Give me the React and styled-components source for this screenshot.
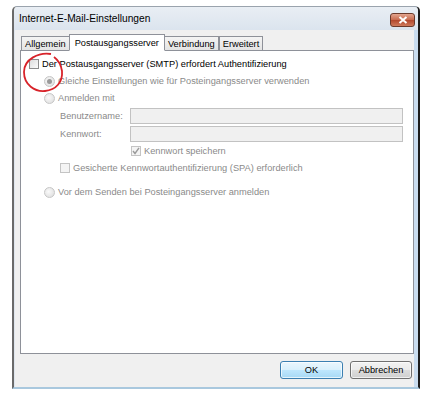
import styled, { createGlobalStyle } from "styled-components";

const Global = createGlobalStyle`
  html, body { margin: 0; padding: 0; background: #fff; }
  body { font-family: "Liberation Sans", Arial, sans-serif; font-size: 9.25px; color: #000; }
`;

const Page = styled.div`
  position: relative;
  width: 428px;
  height: 394px;
  padding: 6px 8px 0 12px;
  box-sizing: border-box;
`;

const Window = styled.div`
  width: 408px;
  height: 383px;
  box-sizing: border-box;
  border-left: 2px solid #6a6a6a;
  border-right: 2px solid #1c1c1c;
  border-top: 1px solid #9aa3ad;
  border-bottom: 2px solid #a9c8de;
  border-radius: 5px 5px 0 0;
  background: #f0f0f0;
  display: flex;
  flex-direction: column;
  box-shadow: inset 1px 0 0 #dfe6ee, inset -4px 0 0 #c9dcef;
`;

const TitleBar = styled.div`
  height: 23px;
  flex: none;
  display: flex;
  align-items: center;
  justify-content: space-between;
  padding: 0 3px 0 5px;
  background: linear-gradient(#e9eef4, #dbe4ee);
  border-radius: 4px 4px 0 0;
  font-size: 10.2px;
`;

const Close = styled.div`
  width: 25px;
  height: 14px;
  margin-top: 2px;
  border: 1px solid #6b3a2c;
  border-radius: 3px;
  background: linear-gradient(#e3a58f, #c86a4e 50%, #b2472c 51%, #cf7a5c);
  display: flex;
  align-items: center;
  justify-content: center;
  box-sizing: border-box;
`;

const Client = styled.div`
  flex: 1;
  display: flex;
  flex-direction: column;
  padding: 3px 4px 0 6px;
`;

const Tabs = styled.div`
  display: flex;
  align-items: flex-end;
  height: 17px;
  padding-left: 1px;
  position: relative;
  z-index: 1;
`;

const Tab = styled.div`
  height: ${(p) => (p.$active ? "17px" : "14px")};
  padding: 0 ${(p) => (p.$active ? "5px" : "3px")};
  margin: 0 ${(p) => (p.$active ? "-1px" : "0")};
  display: flex;
  align-items: center;
  box-sizing: border-box;
  border: 1px solid #8e9199;
  border-bottom: ${(p) => (p.$active ? "1px solid #fff" : "none")};
  background: ${(p) => (p.$active ? "#fff" : "linear-gradient(#f4f4f4, #e4e4e4)")};
  padding-top: ${(p) => (p.$active ? "0" : "1px")};
  margin-bottom: ${(p) => (p.$active ? "-1px" : "0")};
`;

const Panel = styled.div`
  height: 304px;
  box-sizing: border-box;
  border: 1px solid #8e9199;
  background: #fff;
  padding: 5px 6px 0 8px;
  display: flex;
  flex-direction: column;
`;

const Row = styled.div`
  display: flex;
  align-items: center;
  gap: 3px;
  height: ${(p) => p.$h || 16}px;
  padding-left: ${(p) => p.$indent || 0}px;
  color: ${(p) => (p.$disabled ? "#8a8a8a" : "#000")};
`;

const Box = styled.div`
  width: 10px;
  height: 10px;
  box-sizing: border-box;
  border: 1px solid ${(p) => (p.$disabled ? "#c4c4c4" : "#8c8c8c")};
  background: ${(p) => (p.$disabled ? "#f4f4f4" : "linear-gradient(135deg, #dcdcdc, #fbfbfb)")};
  display: flex;
  align-items: center;
  justify-content: center;
  flex: none;
`;

const Radio = styled.div`
  width: 11px;
  height: 11px;
  border-radius: 50%;
  box-sizing: border-box;
  border: 1px solid #c6c6c6;
  background: radial-gradient(circle at 40% 40%, #fafafa, #dadada);
  display: flex;
  align-items: center;
  justify-content: center;
  flex: none;
  &::after {
    content: "";
    display: ${(p) => (p.$on ? "block" : "none")};
    width: 5px;
    height: 5px;
    border-radius: 50%;
    background: #9a9a9a;
  }
`;

const Field = styled.div`
  display: flex;
  align-items: center;
  height: ${(p) => p.$h}px;
  padding-left: 31px;
  color: #8a8a8a;
`;

const FieldLabel = styled.div`
  width: 70px;
  flex: none;
`;

const Input = styled.div`
  width: 273px;
  height: 16px;
  box-sizing: border-box;
  border: 1px solid #c2c2c2;
  background: #f0f0f0;
`;

const Footer = styled.div`
  display: flex;
  justify-content: flex-end;
  gap: 7px;
  padding: 7px 2px 0 0;
`;

const Button = styled.div`
  width: ${(p) => p.$w}px;
  height: 18px;
  box-sizing: border-box;
  border: 1px solid ${(p) => (p.$default ? "#3c7fb1" : "#707070")};
  border-radius: 3px;
  background: ${(p) =>
    p.$default
      ? "linear-gradient(#eaf6fd, #d9f0fc 50%, #bee6fd 51%, #a7d9f5)"
      : "linear-gradient(#f2f2f2, #ebebeb 50%, #dddddd 51%, #cfcfcf)"};
  box-shadow: inset 0 0 0 1px rgba(255, 255, 255, 0.7);
  display: flex;
  align-items: center;
  justify-content: center;
`;

const Annotation = styled.svg`
  position: absolute;
  left: 21px;
  top: 51px;
  pointer-events: none;
`;

const Check = () => (
  <svg width="8" height="8" viewBox="0 0 8 8">
    <path d="M1 4 L3 6.5 L7 0.8" fill="none" stroke="#9a9a9a" strokeWidth="1.4" />
  </svg>
);

export default function App() {
  return (
    <Page>
      <Global />
      <Window>
        <TitleBar>
          <span>Internet-E-Mail-Einstellungen</span>
          <Close>
            <svg width="10" height="8" viewBox="0 0 10 8">
              <path d="M1.5 1 L8.5 7 M8.5 1 L1.5 7" stroke="#fff" strokeWidth="2" />
            </svg>
          </Close>
        </TitleBar>
        <Client>
          <Tabs>
            <Tab>Allgemein</Tab>
            <Tab $active>Postausgangsserver</Tab>
            <Tab>Verbindung</Tab>
            <Tab>Erweitert</Tab>
          </Tabs>
          <Panel>
            <Row $h={16}>
              <Box />
              <span>Der Postausgangsserver (SMTP) erfordert Authentifizierung</span>
            </Row>
            <Row $indent={15} $disabled $h={18}>
              <Radio $on />
              <span>Gleiche Einstellungen wie für Posteingangsserver verwenden</span>
            </Row>
            <Row $indent={15} $disabled $h={16}>
              <Radio />
              <span>Anmelden mit</span>
            </Row>
            <Field $h={20}>
              <FieldLabel>Benutzername:</FieldLabel>
              <Input />
            </Field>
            <Field $h={16}>
              <FieldLabel>Kennwort:</FieldLabel>
              <Input />
            </Field>
            <Row $indent={102} $disabled $h={18}>
              <Box $disabled>
                <Check />
              </Box>
              <span>Kennwort speichern</span>
            </Row>
            <Row $indent={31} $disabled $h={16}>
              <Box $disabled />
              <span>Gesicherte Kennwortauthentifizierung (SPA) erforderlich</span>
            </Row>
            <Row $indent={15} $disabled $h={32}>
              <Radio />
              <span>Vor dem Senden bei Posteingangsserver anmelden</span>
            </Row>
          </Panel>
          <Footer>
            <Button $w={63} $default>OK</Button>
            <Button $w={62}>Abbrechen</Button>
          </Footer>
        </Client>
      </Window>
      <Annotation width="46" height="44" viewBox="0 0 46 44">
        <path
          d="M30 3 C 18 1, 3 8, 3 21 C 3 34, 14 41, 24 40 C 35 39, 42 31, 41 20 C 40 13, 37 9, 33 6"
          fill="none"
          stroke="#d8232a"
          strokeWidth="1.8"
        />
      </Annotation>
    </Page>
  );
}
